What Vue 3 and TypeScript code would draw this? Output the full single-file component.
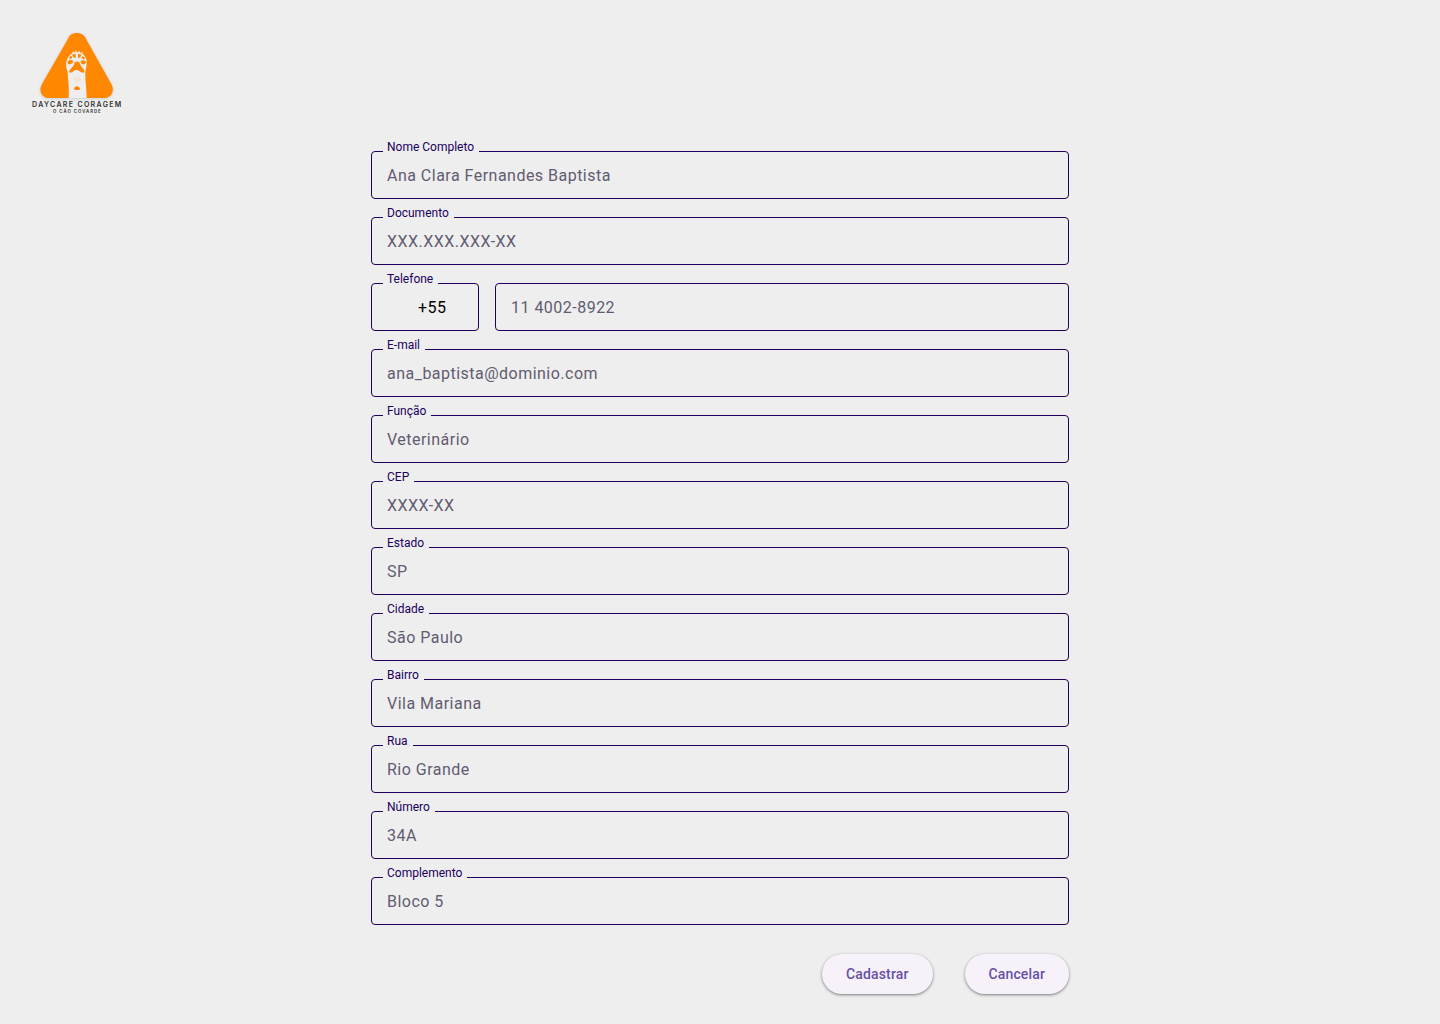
<script setup lang="ts">
import { reactive } from 'vue'

interface Field {
  id: string
  label: string
  placeholder: string
  type?: string
}

const before: Field[] = [
  { id: 'nome', label: 'Nome Completo', placeholder: 'Ana Clara Fernandes Baptista' },
  { id: 'documento', label: 'Documento', placeholder: 'XXX.XXX.XXX-XX' },
]

const after: Field[] = [
  { id: 'email', label: 'E-mail', placeholder: 'ana_baptista@dominio.com', type: 'email' },
  { id: 'funcao', label: 'Função', placeholder: 'Veterinário' },
  { id: 'cep', label: 'CEP', placeholder: 'XXXX-XX' },
  { id: 'estado', label: 'Estado', placeholder: 'SP' },
  { id: 'cidade', label: 'Cidade', placeholder: 'São Paulo' },
  { id: 'bairro', label: 'Bairro', placeholder: 'Vila Mariana' },
  { id: 'rua', label: 'Rua', placeholder: 'Rio Grande' },
  { id: 'numero', label: 'Número', placeholder: '34A' },
  { id: 'complemento', label: 'Complemento', placeholder: 'Bloco 5' },
]

const form = reactive<Record<string, string>>({ ddi: '+55' })

function clearForm() {
  for (const key of Object.keys(form)) form[key] = key === 'ddi' ? '+55' : ''
}
</script>

<template>
  <div class="page">
    <header class="header">
      <svg class="logo" viewBox="0 0 345 315" role="img" aria-label="Daycare Coragem, o cão covarde">
        <path class="sign" d="M145 55C151 34 189 34 197 55L274 192C286 214 272 234 252 234H88C66 234 54 214 66 192Z" />
        <!-- body and head -->
        <path class="dog" d="M146 234C148 202 144 177 143 157C139 146 136 132 140 122C143 111 148 105 155 101L160 94L164 99L168 90L171 98L178 93L180 99L188 96L187 102C197 107 201 119 200 132C199 145 195 151 196 164C196 190 200 210 200 234Z" />
        <!-- forehead patches -->
        <path class="mark" d="M156 104L167 101L167 114L160 112ZM174 101L185 104L181 112L174 114ZM146 113L154 107L157 114L150 117ZM188 108L196 114L191 118L184 115Z" />
        <!-- eyes -->
        <path class="mark" d="M143 125C147 119 156 119 160 124C157 132 149 135 143 131ZM182 124C186 119 195 120 198 126C197 133 189 135 184 131Z" />
        <!-- muzzle -->
        <path class="mark" d="M147 155C150 146 160 140 163 132C161 122 180 122 180 132C183 140 192 146 194 155C191 161 183 157 178 153C172 149 167 149 161 153C156 158 149 160 147 155Z" />
        <path class="mark" d="M162 207C163 196 179 196 180 207C180 211 162 211 162 207Z" />
        <path class="faint" d="M160 180L167 174L170 181L177 172L180 179L186 181M166 178L175 184L183 175" />
        <text class="name" x="172" y="261">DAYCARE CORAGEM</text>
        <text class="tagline" x="172" y="278">O CÃO COVARDE</text>
      </svg>
    </header>

    <main>
      <form class="form" @submit.prevent>
        <div v-for="f in before" :key="f.id" class="field">
          <label :for="f.id">{{ f.label }}</label>
          <input :id="f.id" v-model="form[f.id]" type="text" :placeholder="f.placeholder" />
        </div>

        <div class="phone">
          <div class="field code">
            <label for="ddi">Telefone</label>
            <input id="ddi" v-model="form.ddi" type="text" />
          </div>
          <div class="field number">
            <input id="telefone" v-model="form.telefone" type="tel" aria-label="Número de telefone" placeholder="11 4002-8922" />
          </div>
        </div>

        <div v-for="f in after" :key="f.id" class="field">
          <label :for="f.id">{{ f.label }}</label>
          <input :id="f.id" v-model="form[f.id]" :type="f.type ?? 'text'" :placeholder="f.placeholder" />
        </div>

        <div class="actions">
          <button type="submit">Cadastrar</button>
          <button type="button" @click="clearForm">Cancelar</button>
        </div>
      </form>
    </main>
  </div>
</template>

<style>
body {
  margin: 0;
  background: #eeeeee;
}
</style>

<style scoped>
.page {
  min-height: 100vh;
  box-sizing: border-box;
  padding: 20px 20px 28px;
  background: #eeeeee;
  font-family: Roboto, "Liberation Sans", sans-serif;
}

.header {
  display: flex;
  margin-bottom: 26px;
}

.logo {
  display: block;
  width: 115px;
  height: 105px;
}

.sign {
  fill: #ff8800;
  filter: drop-shadow(0 2px 5px rgba(0, 0, 0, 0.15));
}

.dog {
  fill: #eeeeee;
}

.mark {
  fill: #ff8800;
}

.faint {
  fill: none;
  stroke: #fbd3a4;
  stroke-width: 2;
}

.name,
.tagline {
  font-family: Inter, sans-serif;
  font-weight: 600;
  fill: #333333;
  text-anchor: middle;
}

.name {
  font-size: 21px;
  letter-spacing: 4px;
}

.tagline {
  font-size: 13px;
  letter-spacing: 3px;
}

.form {
  display: flex;
  flex-direction: column;
  gap: 18px;
  max-width: 698px;
  margin: 0 auto;
}

.field {
  position: relative;
}

.field label {
  position: absolute;
  top: -12px;
  left: 12px;
  padding: 0 5px 0 4px;
  background: #eeeeee;
  color: #21005d;
  font-size: 12px;
  line-height: 16px;
}

.field input {
  display: block;
  box-sizing: border-box;
  width: 100%;
  height: 48px;
  padding: 0 15px;
  border: 1px solid #21005d;
  border-radius: 4px;
  outline: none;
  background: transparent;
  color: #000000;
  font-family: inherit;
  font-size: 16px;
  letter-spacing: 0.03em;
}

.field input::placeholder {
  color: #625b71;
  opacity: 1;
}

.phone {
  display: flex;
  gap: 16px;
}

.code {
  flex: 0 0 108px;
}

.field.code input {
  padding: 0 16px 0 46px;
}

.number {
  flex: 1;
}

.actions {
  display: flex;
  justify-content: flex-end;
  gap: 32px;
  margin-top: 11px;
}

.actions button {
  height: 40px;
  padding: 0 24px;
  border: 0;
  border-radius: 20px;
  background: #f7f2fa;
  box-shadow: 0 1px 3px 1px rgba(0, 0, 0, 0.15), 0 1px 2px rgba(0, 0, 0, 0.3);
  color: #6750a4;
  font-family: inherit;
  font-size: 14px;
  font-weight: 500;
  letter-spacing: 0.01em;
  cursor: pointer;
}
</style>
